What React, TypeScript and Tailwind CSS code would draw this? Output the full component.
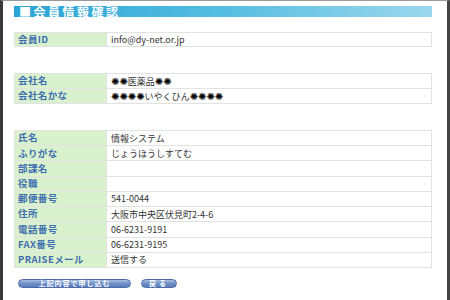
const jp = { fontFamily: '"Noto Sans CJK JP", "DejaVu Sans", sans-serif' };

type Row = { label: string; value: string; redact?: boolean };

const Table = ({ rows, height }: { rows: Row[]; height: string }) => (
  <div
    className={`grid grid-cols-[91px_1fr] gap-px bg-[#e2e2e2] p-px ${height}`}
    style={{ gridTemplateRows: `repeat(${rows.length}, 1fr)` }}
  >
    {rows.map((r) => (
      <div key={r.label} className="contents">
        <div className="flex items-center bg-[#d9f1cc] pl-[3px] text-[9.5px] leading-none font-bold tracking-[0.4px] text-[#3f6fb0]">
          {r.label}
        </div>
        <div className="flex items-center bg-white pl-[4px] text-[9px] leading-none text-[#333]">
          {r.redact ? <Redacted text={r.value} /> : r.value}
        </div>
      </div>
    ))}
  </div>
);

// blobs are scribbled over parts of the company name
const Redacted = ({ text }: { text: string }) => (
  <span>
    {text.split('').map((c, i) =>
      c === '*' ? (
        <span key={i} className="text-[10px] font-bold text-black">✺</span>
      ) : (
        <span key={i}>{c}</span>
      )
    )}
  </span>
);

export default function App() {
  return (
    <div
      className="h-[300px] w-[450px] overflow-hidden border-t border-r-[3px] border-l-[3px] border-t-[#9a9a9a] border-r-[#444] border-l-[#3a3a3a] bg-white pt-[5px] pr-[15px] pl-[11px]"
      style={jp}
    >
      <div className="flex h-[11px] items-center bg-gradient-to-r from-[#2aa4d6] via-[#55bde0] to-[#9ad7ec]">
        <span className="pl-[5px] text-[12px] leading-none font-bold tracking-[2.5px] text-white">■会員情報確認</span>
      </div>

      <div className="mt-[15px]">
        <Table height="h-[15px]" rows={[{ label: '会員ID', value: 'info@dy-net.or.jp' }]} />
      </div>

      <div className="mt-[26px]">
        <Table
          height="h-[31px]"
          rows={[
            { label: '会社名', value: '**医薬品**', redact: true },
            { label: '会社名かな', value: '****いやくひん****', redact: true },
          ]}
        />
      </div>

      <div className="mt-[26px]">
        <Table
          height="h-[138px]"
          rows={[
            { label: '氏名', value: '情報システム' },
            { label: 'ふりがな', value: 'じょうほうしすてむ' },
            { label: '部課名', value: '' },
            { label: '役職', value: '' },
            { label: '郵便番号', value: '541-0044' },
            { label: '住所', value: '大阪市中央区伏見町2-4-6' },
            { label: '電話番号', value: '06-6231-9191' },
            { label: 'FAX番号', value: '06-6231-9195' },
            { label: 'PRAISEメール', value: '送信する' },
          ]}
        />
      </div>

      <div className="mt-[11px] flex gap-[10px] pl-[4px]">
        <button className="flex h-[9px] w-[113px] items-center justify-center rounded-full border border-[#4d6aa6] bg-gradient-to-b from-[#a9bde3] via-[#7090c8] to-[#5b7cbb] text-[7px] leading-none font-bold tracking-[1px] text-white">
          上記内容で申し込む
        </button>
        <button className="flex h-[9px] w-[36px] items-center justify-center rounded-full border border-[#4d6aa6] bg-gradient-to-b from-[#a9bde3] via-[#7090c8] to-[#5b7cbb] text-[7px] leading-none font-bold tracking-[3px] text-white">
          戻る
        </button>
      </div>
    </div>
  );
}
